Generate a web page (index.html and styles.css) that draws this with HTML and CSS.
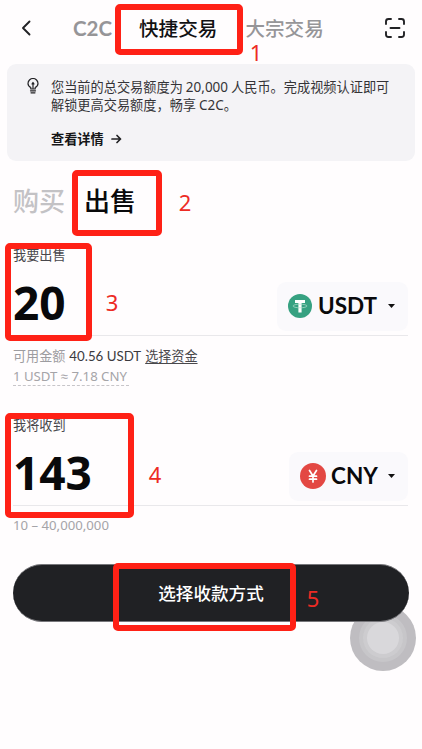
FILE: index.html
```html
<!DOCTYPE html>
<html lang="zh-CN">
<head>
<meta charset="utf-8">
<title>快捷交易</title>
<link rel="stylesheet" href="styles.css">
</head>
<body>
<main class="screen">
  <header class="top">
    <svg class="back" width="12" height="18" viewBox="0 0 12 18"><path d="M8.500 2.500 2 9 8.500 15.500" /></svg>
    <nav class="modes"><span class="c2c">C2C</span><span class="active">快捷交易</span><span>大宗交易</span></nav>
    <svg class="scan" width="22" height="22" viewBox="0 0 22 22"><path d="M2 7V4.500Q2 2 4.500 2H7M15 2h2.500Q20 2 20 4.500V7M20 15v2.500Q20 20 17.500 20H15M7 20H4.500Q2 20 2 17.500V15M6.500 11h9" /></svg>
  </header>
  <section class="notice">
    <svg class="bulb" width="12" height="16" viewBox="0 0 12 16"><path d="M3.800 11V9.500C2 8.600 1 7.200 1 5.500a5 5 0 0 1 10 0c0 1.700-1 3.100-2.800 4V11ZM6 10V6M5 6l1-1.500L7 6ZM3.500 12.800h5M4 14.800h4" /></svg>
    <div>
      <p>您当前的总交易额度为 <span class="num">20,000</span> 人民币。完成视频认证即可<br>解锁更高交易额度，畅享 <span class="num">C2C</span>。</p>
      <a class="details">查看详情 <svg width="11" height="10" viewBox="0 0 11 10"><path d="M1 5h8.500M6 1.500 9.500 5 6 8.500" /></svg></a>
    </div>
  </section>
  <nav class="sides"><span>购买</span><span class="active">出售</span></nav>
  <section class="field">
    <label>我要出售</label>
    <div class="entry">
      <strong>20</strong>
      <div class="currency">
        <svg width="24" height="24" viewBox="0 0 24 24"><circle cx="12" cy="12" r="12" fill="#36a181"/><path d="M7 6h10v3h-3.400v9.500h-3.200V9H7z" fill="#fff"/><ellipse cx="12" cy="12" rx="7" ry="1.800" fill="none" stroke="#b5decf" stroke-width=".7"/></svg>
        <span class="usdt">USDT</span><i></i>
      </div>
    </div>
    <p class="available">可用金额 <span>40.56 USDT</span> <a>选择资金</a></p>
    <p class="rate">1 USDT ≈ 7.18 CNY</p>
  </section>
  <section class="field receive">
    <label>我将收到</label>
    <div class="entry">
      <strong>143</strong>
      <div class="currency">
        <svg width="26" height="26" viewBox="0 0 26 26"><circle cx="13" cy="13" r="13" fill="#e34843"/><path d="m9.500 7.500 3.500 5.500 3.500-5.500M13 13v6M9.500 13.200h7M9.500 16.200h7" fill="none" stroke="#fff" stroke-width="1.700"/></svg>
        <span class="cny">CNY</span><i></i>
      </div>
    </div>
    <p class="limits">10 – 40,000,000</p>
  </section>
  <button class="submit">选择收款方式</button>
  <div class="touch"><div><div><div></div></div></div></div>
  <div class="mark m1"></div><b class="step s1">1</b>
  <div class="mark m2"></div><b class="step s2">2</b>
  <div class="mark m3"></div><b class="step s3">3</b>
  <div class="mark m4"></div><b class="step s4">4</b>
  <div class="mark m5"></div><b class="step s5">5</b>
</main>
</body>
</html>
```
FILE: styles.css
```css
* { box-sizing: border-box; }
body { margin: 0; background: #fffdfe; color: #09090b; font-family: "Noto Sans CJK SC", sans-serif; }
p { margin: 0; }
svg path { stroke-linecap: round; stroke-linejoin: round; }
.screen { position: relative; width: 422px; height: 749px; overflow: hidden; }
.top { height: 64px; padding: 0 16px 8px 21px; display: flex; align-items: center; }
.back path, .scan path, .details path, .bulb path { fill: none; stroke: #222225; stroke-width: 1.9; }
.scan { margin-left: auto; }
.modes { display: flex; align-items: center; gap: 28px; margin-left: 40px; color: #969598; font-size: 19.6px; line-height: 22px; font-weight: 500; white-space: nowrap; }
.modes .active { color: #111113; }
.c2c { width: 38px; font-family: Lato, sans-serif; font-size: 20.5px; font-weight: 700; }
.notice { height: 97px; margin: 0 7px; padding: 14px 20px 0; display: flex; gap: 12px; border-radius: 9px; background: #f4f3f6; font-size: 13.2px; line-height: 18px; color: #343337; white-space: nowrap; }
.bulb { flex: none; }
.bulb path { stroke-width: 1.2; }
.num { font-family: "Noto Sans", sans-serif; font-size: 13.5px; }
.details { display: flex; align-items: center; gap: 7px; margin-top: 16px; color: #161618; font-weight: 600; }
.details path { stroke-width: 1.7; }
.sides { display: flex; gap: 19px; margin: 19px 13px 0; font-size: 26px; line-height: 40px; color: #c3c2c5; font-weight: 500; }
.sides .active { color: #09090b; }
.field { margin: 25px 14px 0 13px; height: 146px; }
.field label { display: block; height: 20px; font-size: 13.2px; line-height: 20px; color: #49484c; }
.entry { height: 71px; display: flex; justify-content: space-between; align-items: center; border-bottom: 1px solid #e9e8eb; }
.entry strong { font: 700 46px/60px "Noto Sans", sans-serif; padding: 4px 0 0; }
.currency { height: 49px; margin-top: 12px; padding: 0 13px 0 11px; display: flex; align-items: center; border-radius: 9px; background: #faf9fc; font: 700 22.5px/30px Lato, sans-serif; }
.currency span { margin-left: 6px; padding-bottom: 1px; }
.usdt { width: 60px; }
.cny { width: 47px; }
.currency .cny { margin-left: 5px; }
.currency i { margin-left: 10px; width: 7px; height: 4px; background: #111; clip-path: polygon(0 0, 100% 0, 50% 100%); }
.available { margin-top: 10px; font-size: 13.1px; line-height: 20px; color: #9d9ca0; white-space: nowrap; }
.available span { margin: 0 1px; font-family: Lato, "Noto Sans", sans-serif; font-size: 13.3px; color: #3b3a3e; }
.available a { color: #49484c; text-decoration: underline; text-underline-offset: 2px; }
.rate { width: 116px; margin-top: 1px; height: 19px; border-bottom: 1px dashed #c7c5c9; font: 13.2px/19px "Noto Sans", sans-serif; color: #a5a4a8; white-space: nowrap; }
.receive { height: 125px; margin-top: 24px; }
.limits { margin-top: 9px; font: 13.2px/20px "Noto Sans", sans-serif; color: #a5a4a8; }
.submit { position: relative; z-index: 1; display: block; width: 396px; height: 58px; margin: 24px 13px 0; padding: 0 0 1px; border: 1px solid #77777b; border-width: 1px 0; border-radius: 29px; background: #202124; color: #fff; font: 500 17.6px/28px "Noto Sans CJK SC", sans-serif; }
.touch { position: absolute; left: 350px; top: 605px; width: 66px; height: 66px; padding: 9px; border-radius: 50%; background: #bfbdc1; }
.touch div { height: 100%; padding: 4px; border-radius: 50%; background: rgba(220,219,223,.3); }
.touch div div div { background: #d9d8db; }
.mark { position: absolute; z-index: 2; border: 6px solid #ff2116; border-radius: 5px; }
.m1 { left: 115px; top: 4px; width: 128px; height: 51px; }
.m2 { left: 72px; top: 170px; width: 90px; height: 66px; }
.m3 { left: 5px; top: 243px; width: 87px; height: 98px; }
.m4 { left: 5px; top: 413px; width: 129px; height: 105px; }
.m5 { left: 113px; top: 563px; width: 183px; height: 68px; }
.step { position: absolute; z-index: 2; width: 14px; text-align: center; color: #ed2b24; font: 400 22px/22px "Noto Sans", sans-serif; }
.s1 { left: 249px; top: 41px; }
.s2 { left: 178px; top: 191px; }
.s3 { left: 105px; top: 291px; }
.s4 { left: 148px; top: 463px; }
.s5 { left: 306px; top: 587px; }
```
